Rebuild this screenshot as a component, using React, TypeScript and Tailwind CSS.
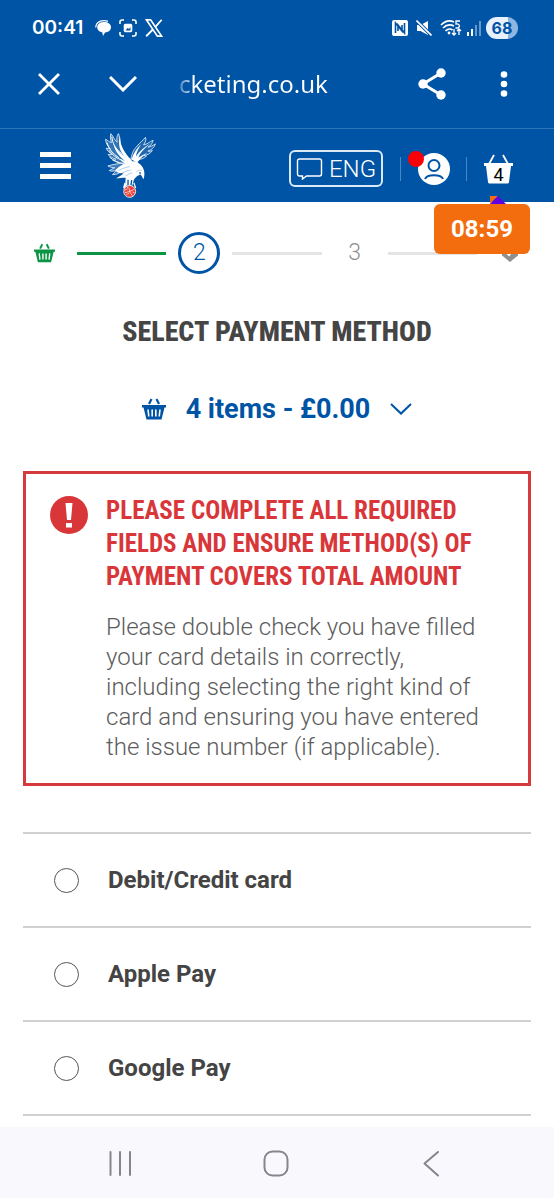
import React, { useState } from 'react';

const methods = [
  { id: 'card', label: 'Debit/Credit card' },
  { id: 'apple', label: 'Apple Pay' },
  { id: 'google', label: 'Google Pay' },
];

const BasketIcon = ({ className }: { className: string }) => (
  <svg className={className} viewBox="0 0 24 22" fill="none">
    <path d="M9.500 1 7 6M14.500 1 17 6" stroke="currentColor" strokeWidth="2.200" />
    <path fill="currentColor" d="M0 7h24v2.500h-1.500L19.500 21.500h-15L1.500 9.500H0Z" />
    <path d="m6 11.500.8 7M10.200 11.500v7M13.800 11.500v7M18 11.500l-.8 7" stroke="#fff" strokeWidth="1.600" />
  </svg>
);

const ClubCrest = () => (
  <svg className="h-17 w-14" viewBox="308 36 168 206" fill="none" strokeLinejoin="round">
    {/* left wing */}
    <path fill="#fff" fillOpacity=".2" stroke="#c9dcef" strokeWidth="3" d="M386 120c-8-18-20-28-25-45-2-9-1-20-7-34-6 7-5 17-4 26-8-7-10-15-19-26-3 10-1 18 2 27-8-2-11-6-18-10 1 13 7 22 14 28-5 1-8 0-12-1 3 9 10 14 18 18-5 2-9 1-13 1 7 8 15 11 25 14-4 3-7 3-11 3 11 7 22 7 34 12Z" />
    <path fill="#fff" d="M357 48c2 29 13 50 33 69l12 15-12 12c-13-11-24-15-33-28l17 8c-15-13-31-29-35-52 8 15 18 27 32 37-12-15-18-31-14-61Z" />
    <path stroke="#fff" strokeWidth="3" d="M334 50c1 19 11 37 30 52M319 68c6 20 18 34 36 46M325 91c10 14 22 24 40 31M327 112c12 10 25 17 42 21" />
    {/* right wing */}
    <path fill="#fff" fillOpacity=".12" stroke="#c9dcef" strokeWidth="3" d="M392 118c4-22 9-29 18-39 10-12 17-16 26-27 3 9-1 16-6 23 12-2 17-9 29-14-2 10-8 17-16 21 8-1 15-5 23-10-4 12-13 19-23 22 5 1 9 0 14-2-7 10-16 14-26 15l8 2c-9 8-17 10-25 10Z" />
    <path fill="#fff" d="M394 119c6-20 15-32 28-45-7 14-13 21-15 36 12-17 25-28 43-39-17 15-30 27-36 42l28-15c-16 14-25 20-31 32Z" />
    {/* tail, body and head */}
    <path fill="#fff" fillOpacity=".25" stroke="#c9dcef" strokeWidth="3" d="M370 130c-17 2-30 3-48 9 8 4 14 5 21 5-7 4-11 5-17 9 8 3 15 1 23-1-4 5-8 8-13 13 12 1 22-5 30-12l25-7Z" />
    <path fill="#fff" d="M344 152c14-14 26-20 46-26 13-5 27 2 35 14 6 8 11 21 5 39-4-4-4-10-10-14-9 4-14 8-19 15l-5 18h-22l2-23c-9-1-19 2-29 2 9-6 18-9 23-18-11 4-17 2-26-7Z" />
    <path stroke="#8eb6e0" strokeWidth="2" d="M354 153c13-8 24-10 35-12m-24 21c10-8 19-10 28-11m-18 18 21-10m12-2c5-5 11-6 17-4" />
    <path stroke="#0054a6" strokeWidth="4" d="M383 181v16m11-15-2 15m25-38 5 2" />
    <path stroke="#fff" strokeWidth="4" d="m374 190-4 15m31-15 5 16m-29-9-7 10m22-7 8 8" />
    <circle cx="388" cy="216" r="18" fill="#ef4136" stroke="#dce8f5" strokeWidth="3" />
    <path stroke="#fff" strokeWidth="2" d="M380 202c5 3 9 7 8 14l-14 4m14-4 13-6m-13 6c2 5 5 8 8 13m-18-3 9-5m-14-9 9-4m15 10 6 3" />
  </svg>
);

const StatusBar = () => (
  <div className="flex h-14 items-center justify-between pl-8 pr-9 text-white">
    <div className="flex items-center gap-2">
      <span className="mr-1 font-['Inter',sans-serif] text-[19px] font-semibold">00:41</span>
      <svg className="h-4 w-4" viewBox="0 0 16 16">
        <path fill="currentColor" d="M2.500 5.500C3.500 3 6 2 9 2c4 0 7 2 7 5.200 0 3-2.700 5-6 5.300L8 16l-.8-3.700C3.500 11.800 1.500 9 2.500 5.500Z" />
        <path fill="none" stroke="currentColor" strokeWidth="1.300" d="M.8 7.500C.5 3.500 3.500.8 9 .7c2 0 3 .3 4 .7" />
      </svg>
      <svg className="h-[18px] w-[18px]" viewBox="0 0 18 18" fill="none" stroke="currentColor" strokeWidth="1.600">
        <path d="M1 5V3a2 2 0 0 1 2-2h2m8 0h2a2 2 0 0 1 2 2v2M1 13v2a2 2 0 0 0 2 2h2m8 0h2a2 2 0 0 0 2-2v-2" />
        <rect x="5.500" y="5.500" width="7" height="7" rx="1" fill="currentColor" />
        <path fill="#0054a6" stroke="none" d="m6.500 11.500 2-2.500 1.500 1 1.500-2v3.500Z" />
      </svg>
      <svg className="h-[18px] w-[18px]" viewBox="0 0 24 24" fill="none" stroke="currentColor">
        <path strokeWidth="2.200" d="M2 1.200h5.500l14.500 21.600h-5.500Z" />
        <path strokeWidth="2.400" d="M22.300 1 13.500 10.800M10.500 14 1.500 23" />
      </svg>
    </div>
    <div className="flex items-center gap-2">
      <svg className="h-4 w-4" viewBox="0 0 16 16">
        <rect width="16" height="16" rx="2" fill="currentColor" />
        <path fill="none" stroke="#0054a6" strokeWidth="1.600" d="M3.500 13V3l6.500 8V5M12.500 3v10L6 5v6" />
      </svg>
      <svg className="h-4 w-4" viewBox="0 0 16 16">
        <path fill="currentColor" d="M1 5h3.500L12 1v14l-7.500-4H1Z" />
        <path stroke="#0054a6" strokeWidth="3.500" d="m0 0 16 16" />
        <path stroke="currentColor" strokeWidth="1.600" d="m.5.500 15 15" />
      </svg>
      <svg className="h-[18px] w-[22px]" viewBox="0 0 22 18" fill="none" stroke="currentColor" strokeWidth="1.700">
        <path d="M1 6c4-4 9-5 13-3M3 9c3-3 7-4 11-2M5.500 12c2-2 5-2.500 7-1" />
        <circle cx="9" cy="14" r="1.400" fill="currentColor" stroke="none" />
        <path strokeWidth="1.300" d="M20 2h-4v3c4-1 4.500 4 1 4h-1.500M14 10v6m-2-2 2 2 2-2M19 16v-6m-2 2 2-2 2 2" />
      </svg>
      <svg className="-ml-1 h-4 w-4" viewBox="0 0 16 16" fill="currentColor">
        <rect x="1" y="12" width="2" height="4" />
        <rect x="5" y="9" width="2" height="7" />
        <rect x="9" y="5" width="2" height="11" opacity=".4" />
        <rect x="13" y="1" width="2" height="15" opacity=".4" />
      </svg>
      <span className="-ml-1 flex h-[22px] w-8 items-center justify-center rounded-full bg-linear-to-r from-[#e8f1fb] from-68% to-[#8eb6e0] to-68% font-['Inter',sans-serif] text-[16px] font-bold text-[#0054a6]">68</span>
    </div>
  </div>
);

const BrowserBar = () => (
  <div className="flex h-[72px] items-center pb-4 pl-[31px] pr-8 text-white">
    <button aria-label="Close" className="flex h-9 w-9 items-center justify-center">
      <svg className="h-6 w-6" viewBox="0 0 24 24" stroke="currentColor" strokeWidth="2.800"><path d="m2 2 20 20M22 2 2 22" /></svg>
    </button>
    <button aria-label="Minimise" className="ml-[38px] flex h-9 w-9 items-center justify-center">
      <svg className="h-4 w-7" viewBox="0 0 28 16" fill="none" stroke="currentColor" strokeWidth="3"><path d="m1 1 13 13L27 1" /></svg>
    </button>
    <span className="ml-[38px] flex-1 bg-linear-to-r from-[#3d7dbd] to-white to-6% bg-clip-text font-['Noto_Sans',sans-serif] text-[24px] text-transparent">cketing.co.uk</span>
    <button aria-label="Share" className="flex h-9 w-9 items-center justify-center">
      <svg className="h-8 w-7" viewBox="0 0 28 32" fill="currentColor">
        <path d="M23 5 5 16l18 11" fill="none" stroke="currentColor" strokeWidth="3" />
        <circle cx="23" cy="5" r="4.700" /><circle cx="5" cy="16" r="4.700" /><circle cx="23" cy="27" r="4.700" />
      </svg>
    </button>
    <button aria-label="More options" className="ml-9 flex h-9 w-9 items-center justify-center">
      <svg className="h-7 w-2" viewBox="0 0 8 28" fill="currentColor"><circle cx="4" cy="4.500" r="3.300" /><circle cx="4" cy="14" r="3.300" /><circle cx="4" cy="23.500" r="3.300" /></svg>
    </button>
  </div>
);

const SiteHeader = () => (
  <header className="relative flex h-[74px] items-center border-t border-[#2e74b8] pl-10 pr-10 text-white">
    <button aria-label="Menu" className="flex h-[27px] w-[31px] flex-col justify-between">
      <span className="h-[5px] w-full bg-white" />
      <span className="h-[5px] w-full bg-white" />
      <span className="h-[5px] w-full bg-white" />
    </button>
    <a href="#home" aria-label="Home" className="ml-8"><ClubCrest /></a>
    <div className="ml-auto flex items-center pt-[6px]">
      <button className="flex h-[37px] w-[94px] items-center justify-center gap-[6px] rounded-md border-2 border-[#dbe8f5] text-[24px] font-light">
        <svg className="h-[22px] w-[27px]" viewBox="0 0 26 22" fill="none" stroke="currentColor" strokeWidth="1.400"><path d="M3 1h20a2 2 0 0 1 2 2v13a2 2 0 0 1-2 2H10l-4 3v-3H3a2 2 0 0 1-2-2V3a2 2 0 0 1 2-2Z" /></svg>
        ENG
      </button>
      <span className="mx-[17px] h-6 w-px bg-[#4a88c4]" />
      <button aria-label="Account, 1 alert" className="relative">
        <svg className="h-8 w-8" viewBox="0 0 32 32" fill="none" stroke="#0054a6" strokeWidth="2">
          <circle cx="16" cy="16" r="16" fill="#fff" stroke="none" />
          <circle cx="16" cy="12.500" r="5.500" />
          <path d="M7 26c2-5 16-5 18 0" />
        </svg>
        <span className="absolute -left-[10px] -top-[2px] h-4 w-4 rounded-full bg-[#fb0007]" />
      </button>
      <span className="mx-4 h-6 w-px bg-[#4a88c4]" />
      <button aria-label="Basket" className="relative h-8 w-[31px]">
        <svg className="h-8 w-[31px]" viewBox="0 0 31 32">
          <path fill="#fff" d="M1 10h29v3h-2l-2 16c0 1-1 1.500-2 1.500H7c-1 0-2-.5-2-1.500L3 13H1Z" />
          <path fill="none" stroke="#fff" strokeWidth="1.800" d="m11 2-5 9M20 2l5 9" />
        </svg>
        <span className="absolute inset-x-0 bottom-0 text-center text-[18px] leading-5 text-black">4</span>
      </button>
    </div>
    <div className="absolute right-6 top-[75px] z-10 flex h-[50px] w-24 items-center justify-center rounded-md bg-[#f36c0d] text-[24px] font-bold">
      <svg className="absolute -top-2 left-14 h-2 w-4" viewBox="0 0 16 8"><path fill="#f36c0d" d="M0 0h8L0 8Z" /><path fill="#5f00e5" d="m0 8 8-8 8 8Z" /></svg>
      08:59
    </div>
  </header>
);

const Steps = () => (
  <ol className="flex items-center gap-3 px-[23px] pt-[30px] text-[23px] font-light">
    <li className="flex w-[42px] justify-center"><BasketIcon className="h-5 w-[21px] text-[#0b9444]" /></li>
    <li aria-hidden="true" className="h-[3px] flex-1 bg-[#0b9444]" />
    <li aria-current="step" className="flex h-[42px] w-[42px] items-center justify-center rounded-full border-[3px] border-[#0054a6] text-[#0054a6]">2</li>
    <li aria-hidden="true" className="h-[3px] flex-1 bg-[#e4e4e4]" />
    <li className="flex w-[42px] justify-center text-[#8f8f8f]">3</li>
    <li aria-hidden="true" className="h-[3px] flex-1 bg-[#e4e4e4]" />
    <li className="flex w-[42px] justify-center">
      <svg className="h-5 w-5" viewBox="0 0 20 20"><path fill="#8f8f8f" d="M10 1 18 9.500v3L10 19l-8-6.500v-3Z" /><path fill="none" stroke="#fff" strokeWidth="2" d="m6 9 3 3 5-6" /></svg>
    </li>
  </ol>
);

const PaymentError = () => (
  <section role="alert" className="mt-11 flex border-[3px] border-[#d63a3c] pb-[21px] pl-6 pr-8 pt-5">
    <svg className="mt-[2px] h-[38px] w-[38px] shrink-0" viewBox="0 0 38 38">
      <circle cx="19" cy="19" r="19" fill="#d9363a" />
      <path fill="#fff" d="M15.500 7h7l-1.500 17h-4ZM16 27h6v4.500h-6Z" />
    </svg>
    <div className="ml-[18px]">
      <h2 className="font-['Roboto_Condensed','Liberation_Sans_Narrow',sans-serif] text-[25px] font-bold uppercase leading-[33px] text-[#d9363a]">
        Please complete all required fields and ensure method(s) of payment covers total amount
      </h2>
      <p className="mt-[19px] text-[24px] font-light leading-[30px] text-[#5c5c5c]">
        Please double check you have filled your card details in correctly, including selecting the right kind of card and ensuring you have entered the issue number (if applicable).
      </p>
    </div>
  </section>
);

const AndroidNav = () => (
  <nav className="flex h-[73px] items-center justify-between border-b-2 border-white bg-[#f8f8fd] px-[106px] text-[#85858c]">
    <button aria-label="Recent apps"><svg className="h-7 w-7" viewBox="0 0 28 28" stroke="currentColor" strokeWidth="2" strokeLinecap="round"><path d="M4.500 3v23M14 3v23M24 3v23" /></svg></button>
    <button aria-label="Home screen"><svg className="h-7 w-7" viewBox="0 0 28 28" fill="none" stroke="currentColor" strokeWidth="2"><rect x="1.500" y="2.500" width="23" height="24" rx="8" /></svg></button>
    <button aria-label="Back"><svg className="h-7 w-7" viewBox="0 0 28 28" fill="none" stroke="currentColor" strokeWidth="2" strokeLinecap="round" strokeLinejoin="round"><path d="M18 3 4.500 14.500 18 26.500" /></svg></button>
  </nav>
);

export default function App() {
  const [method, setMethod] = useState('');
  const [open, setOpen] = useState(false);

  return (
    <div className="flex min-h-screen flex-col bg-white font-['Roboto',sans-serif]">
      <div className="bg-[#0054a6]">
        <StatusBar />
        <BrowserBar />
        <SiteHeader />
      </div>

      <main className="flex-1">
        <Steps />
        <div className="px-[23px]">
          <h1 className="mt-[38px] text-center font-['Roboto_Condensed','Liberation_Sans_Narrow',sans-serif] text-[28px] font-extrabold uppercase leading-10 text-[#454545]">
            Select payment method
          </h1>
          <button
            aria-expanded={open}
            onClick={() => setOpen(!open)}
            className="mx-auto mt-[39px] flex h-9 items-center text-[27px] font-bold text-[#0054a6]"
          >
            <BasketIcon className="mr-5 h-[22px] w-6" />
            4 items - £0.00
            <svg className="ml-5 h-3 w-[22px]" viewBox="0 0 22 12" fill="none" stroke="currentColor" strokeWidth="2"><path d="m1 1 10 9.500L21 1" /></svg>
          </button>

          <PaymentError />

          <fieldset aria-label="Payment method" className="mt-[46px] border-t-2 border-[#d0d0d0]">
            {methods.map((m) => (
              <label key={m.id} htmlFor={m.id} className="flex h-[94px] items-center gap-[29px] border-b-2 border-[#d0d0d0] pl-[31px] text-[24px] font-bold text-[#444]">
                <input
                  id={m.id}
                  type="radio"
                  name="method"
                  checked={method === m.id}
                  onChange={() => setMethod(m.id)}
                  className="h-[25px] w-[25px] appearance-none rounded-full border border-[#555] checked:border-8 checked:border-[#0054a6]"
                />
                {m.label}
              </label>
            ))}
          </fieldset>
        </div>
      </main>

      <AndroidNav />
    </div>
  );
}
